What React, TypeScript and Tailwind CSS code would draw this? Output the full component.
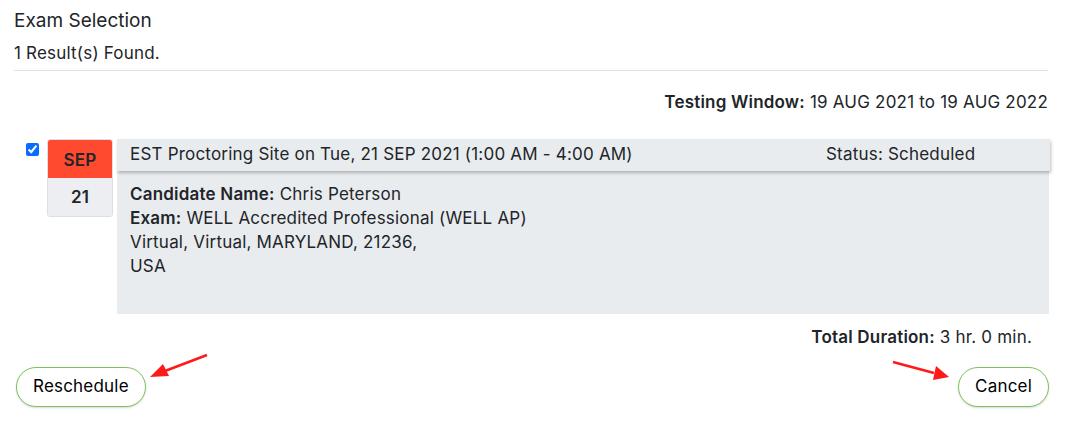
export default function App() {
  return (
    <div className="relative w-[1077px] h-[428px] bg-white text-[#212529] font-['Inter','Liberation_Sans',Arial,sans-serif] tracking-[0.2px]">
      <div className="px-[14px] pt-[8px]">
        <h2 className="text-[19px] leading-[26px] tracking-normal">Exam Selection</h2>
        <p className="text-[17px] leading-[24px] mt-[7px]">1 Result(s) Found.</p>
        <hr className="mt-[5px] w-[1034px] border-t border-[#dee2e6]" />
        <div className="w-[1034px] text-right text-[17px] leading-[24px] mt-[19px]">
          <span className="font-semibold">Testing Window:</span> 19 AUG 2021 to 19 AUG 2022
        </div>

        {/* Exam row */}
        <div className="flex items-start mt-[25px]">
          <input
            type="checkbox"
            checked
            readOnly
            className="w-[13px] h-[13px] mt-[4px] ml-[12px] accent-[#0a6cff]"
          />
          <div className="ml-[8px] w-[66px] rounded-[3px] overflow-hidden border border-[#dcdfe3] text-center font-semibold text-[17px]">
            <div className="bg-[#ff4a30] h-[38px] leading-[40px]">SEP</div>
            <div className="bg-[#eceef1] h-[38px] leading-[38px]">21</div>
          </div>
          <div className="ml-[4px] w-[932px] bg-[#e9ecef] h-[175px]">
            <div className="flex justify-between items-center h-[32px] pl-[13px] bg-[#e9ecef] shadow-[1px_2px_3px_rgba(0,0,0,0.25)] w-[933px] text-[17px]">
              <span>EST Proctoring Site on Tue, 21 SEP 2021 (1:00 AM - 4:00 AM)</span>
              <span className="w-[224px]">Status: Scheduled</span>
            </div>
            <div className="pl-[13px] pt-[11px] text-[17px] leading-[24px]">
              <div>
                <span className="font-semibold">Candidate Name:</span> Chris Peterson
              </div>
              <div>
                <span className="font-semibold">Exam:</span> WELL Accredited Professional (WELL AP)
              </div>
              <div>Virtual, Virtual, MARYLAND, 21236,</div>
              <div>USA</div>
            </div>
          </div>
        </div>

        <div className="w-[1018px] text-right text-[17px] leading-[24px] mt-[11px]">
          <span className="font-semibold">Total Duration:</span> 3 hr. 0 min.
        </div>

        <div className="flex justify-between w-[1035px] mt-[18px] pl-[2px]">
          <button className="h-[40px] px-[16px] rounded-full border border-[#7cc458] bg-white text-black text-[17px] shadow-[0_1px_2px_rgba(0,0,0,0.15)]">
            Reschedule
          </button>
          <button className="h-[40px] px-[16px] rounded-full border border-[#7cc458] bg-white text-black text-[17px] shadow-[0_1px_2px_rgba(0,0,0,0.15)]">
            Cancel
          </button>
        </div>
      </div>

      {/* annotation arrows */}
      <svg className="absolute left-0 top-0 pointer-events-none" width="1077" height="428">
        <line x1="207" y1="355" x2="165" y2="371" stroke="#ff1a1a" strokeWidth="2.5" />
        <polygon points="150,377 163,364 169,376" fill="#ff1a1a" />
        <line x1="893" y1="362" x2="934" y2="373" stroke="#ff1a1a" strokeWidth="2.5" />
        <polygon points="949,377 936,366 933,380" fill="#ff1a1a" />
      </svg>
    </div>
  );
}
